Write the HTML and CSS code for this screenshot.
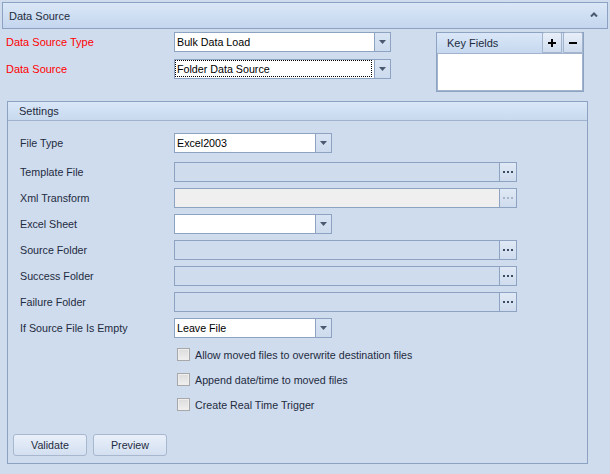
FILE: index.html
```html
<!DOCTYPE html>
<html>
<head>
<meta charset="utf-8">
<link rel="stylesheet" href="styles.css">
</head>
<body>
<div class="window">
  <div class="header">
    <span>Data Source</span>
    <svg class="chev" width="8" height="5" viewBox="0 0 8 5"><polyline points="1,4.5 4,1.5 7,4.5" fill="none" stroke="#4a5870" stroke-width="2"/></svg>
  </div>

  <div class="top">
    <div class="top-fields">
      <div class="row">
        <span class="req">Data Source Type</span>
        <div class="combo w217">
          <span class="val">Bulk Data Load</span>
          <span class="drop"><svg width="7" height="4" viewBox="0 0 7 4"><polygon points="0,0 7,0 3.5,4" fill="#4a5870"/></svg></span>
        </div>
      </div>
      <div class="row">
        <span class="req">Data Source</span>
        <div class="combo w217">
          <span class="val focus">Folder Data Source</span>
          <span class="drop"><svg width="7" height="4" viewBox="0 0 7 4"><polygon points="0,0 7,0 3.5,4" fill="#4a5870"/></svg></span>
        </div>
      </div>
    </div>
    <div class="keyfields">
      <div class="kf-head">
        <span>Key Fields</span>
        <div class="kf-btns">
          <span class="kf-btn"><svg width="8" height="8" viewBox="0 0 8 8"><rect x="3" y="0" width="2" height="8" fill="#000"/><rect x="0" y="3" width="8" height="2" fill="#000"/></svg></span>
          <span class="kf-btn"><svg width="8" height="2" viewBox="0 0 8 2"><rect x="0" y="0" width="8" height="2" fill="#000"/></svg></span>
        </div>
      </div>
      <div class="kf-list"></div>
    </div>
  </div>

  <div class="group">
    <div class="group-head">Settings</div>
    <div class="group-body">
      <div class="frow first">
        <span class="flabel">File Type</span>
        <div class="combo w158">
          <span class="val">Excel2003</span>
          <span class="drop"><svg width="7" height="4" viewBox="0 0 7 4"><polygon points="0,0 7,0 3.5,4" fill="#4a5870"/></svg></span>
        </div>
      </div>
      <div class="frow second">
        <span class="flabel">Template File</span>
        <div class="edit"><span class="txt"></span><span class="ell"><i></i><i></i><i></i></span></div>
      </div>
      <div class="frow">
        <span class="flabel">Xml Transform</span>
        <div class="edit disabled"><span class="txt"></span><span class="ell"><i></i><i></i><i></i></span></div>
      </div>
      <div class="frow">
        <span class="flabel">Excel Sheet</span>
        <div class="combo w158">
          <span class="val"></span>
          <span class="drop"><svg width="7" height="4" viewBox="0 0 7 4"><polygon points="0,0 7,0 3.5,4" fill="#4a5870"/></svg></span>
        </div>
      </div>
      <div class="frow">
        <span class="flabel">Source Folder</span>
        <div class="edit"><span class="txt"></span><span class="ell"><i></i><i></i><i></i></span></div>
      </div>
      <div class="frow">
        <span class="flabel">Success Folder</span>
        <div class="edit"><span class="txt"></span><span class="ell"><i></i><i></i><i></i></span></div>
      </div>
      <div class="frow">
        <span class="flabel">Failure Folder</span>
        <div class="edit"><span class="txt"></span><span class="ell"><i></i><i></i><i></i></span></div>
      </div>
      <div class="frow">
        <span class="flabel">If Source File Is Empty</span>
        <div class="combo w158">
          <span class="val">Leave File</span>
          <span class="drop"><svg width="7" height="4" viewBox="0 0 7 4"><polygon points="0,0 7,0 3.5,4" fill="#4a5870"/></svg></span>
        </div>
      </div>

      <div class="chk"><span class="box"></span><span>Allow moved files to overwrite destination files</span></div>
      <div class="chk"><span class="box"></span><span>Append date/time to moved files</span></div>
      <div class="chk"><span class="box"></span><span>Create Real Time Trigger</span></div>

      <div class="btns">
        <span class="btn">Validate</span>
        <span class="btn">Preview</span>
      </div>
    </div>
  </div>
</div>
</body>
</html>
```

FILE: styles.css
```css
* { box-sizing: border-box; }

body {
  margin: 0;
  background: #cfdcee;
  font-family: "Liberation Sans", Arial, sans-serif;
  font-size: 10.7px;
  color: #1e2b40;
}

.window {
  width: 610px;
  height: 474px;
  padding: 2px 0 0 2px;
}

.header {
  width: 606px;
  height: 27px;
  border: 1px solid #8da2c3;
  background: linear-gradient(#dae7f7, #c4d6ee);
  display: flex;
  align-items: center;
  justify-content: space-between;
  padding: 0 9px 0 6px;
  font-size: 11px;
}

.chev { display: block; margin-top: -2px; }

.top {
  display: flex;
  margin-top: 3px;
  padding-left: 4px;
}

.top-fields {
  display: flex;
  flex-direction: column;
  gap: 7px;
}

.row {
  display: flex;
  align-items: center;
  height: 20px;
}

.req {
  width: 168px;
  color: #f00;
  font-size: 11px;
}

.combo {
  display: flex;
  height: 20px;
  border: 1px solid #8ea2c1;
  background: #fff;
}

.w217 { width: 217px; }
.w158 { width: 158px; }

.combo .val {
  flex: 1;
  display: flex;
  align-items: center;
  padding-left: 2px;
  color: #000;
}

.combo .val.focus {
  border: 1px dotted #000;
  padding-left: 1px;
  margin: 0 2px 1px 0;
}

.combo .drop {
  width: 16px;
  border-left: 1px solid #8ea2c1;
  background: linear-gradient(#d8e4f3, #cddbee);
  display: flex;
  align-items: center;
  justify-content: center;
}

.combo .drop svg { display: block; }

.keyfields {
  margin-left: 45px;
  width: 148px;
  height: 60px;
  border: 1px solid #8ea2c1;
  display: flex;
  flex-direction: column;
}

.kf-head {
  height: 20px;
  display: flex;
  align-items: center;
  padding-left: 10px;
  background: linear-gradient(#dae7f8, #c6d8ef);
  font-size: 11px;
}

.kf-btns {
  margin-left: auto;
  display: flex;
  gap: 1px;
  align-self: flex-start;
  margin-top: -1px;
}

.kf-btn {
  width: 20px;
  height: 21px;
  border: 1px solid #a3b5cd;
  border-radius: 2px 2px 0 0;
  background: linear-gradient(#e8eff9, #cfdcee);
  display: flex;
  align-items: center;
  justify-content: center;
}

.kf-btn svg { display: block; }

.kf-list {
  flex: 1;
  background: #fff;
  border: 1px solid #a2b4cd;
}

.group {
  margin: 9px 0 0 5px;
  width: 581px;
  height: 363px;
  border: 1px solid #8da2c3;
}

.group-head {
  height: 19px;
  border-bottom: 1px solid #9fb3cf;
  background: linear-gradient(#d9e7f8, #c8d9ef);
  padding-left: 11px;
  display: flex;
  align-items: center;
  font-size: 11px;
}

.group-body {
  padding-top: 12px;
  display: flex;
  flex-direction: column;
}

.frow {
  display: flex;
  align-items: center;
  height: 20px;
  margin-top: 6px;
  padding-left: 12px;
}

.frow.first { margin-top: 0; }
.frow.second { margin-top: 9px; }

.flabel { width: 154px; }

.edit {
  display: flex;
  width: 343px;
  height: 20px;
  border: 1px solid #8ea2c1;
}

.edit .txt { flex: 1; }

.edit.disabled .txt { background: #efefef; }

.ell {
  width: 17px;
  border-left: 1px solid #8ea2c1;
  background: linear-gradient(#e0e9f5, #cfdcee);
  display: flex;
  align-items: center;
  justify-content: center;
  gap: 2px;
}

.ell i {
  display: block;
  width: 2px;
  height: 2px;
  background: #3d4b63;
}

.edit.disabled .ell i { background: #a9b6c8; }

.chk {
  display: flex;
  align-items: center;
  height: 17px;
  margin-top: 8px;
  margin-left: 169px;
}

.box {
  width: 13px;
  height: 13px;
  border: 1px solid #a8a8a8;
  background: linear-gradient(#dcdcdc, #f0f0f0);
  box-shadow: inset 0 0 0 1px #eeeeee;
  margin-right: 5px;
}

.btns {
  display: flex;
  gap: 6px;
  margin-top: 21px;
  padding-left: 5px;
}

.btn {
  width: 74px;
  height: 22px;
  border: 1px solid #a7b8ce;
  border-radius: 3px;
  background: linear-gradient(#e9f0fa, #d3dff0);
  display: flex;
  align-items: center;
  justify-content: center;
}
```
